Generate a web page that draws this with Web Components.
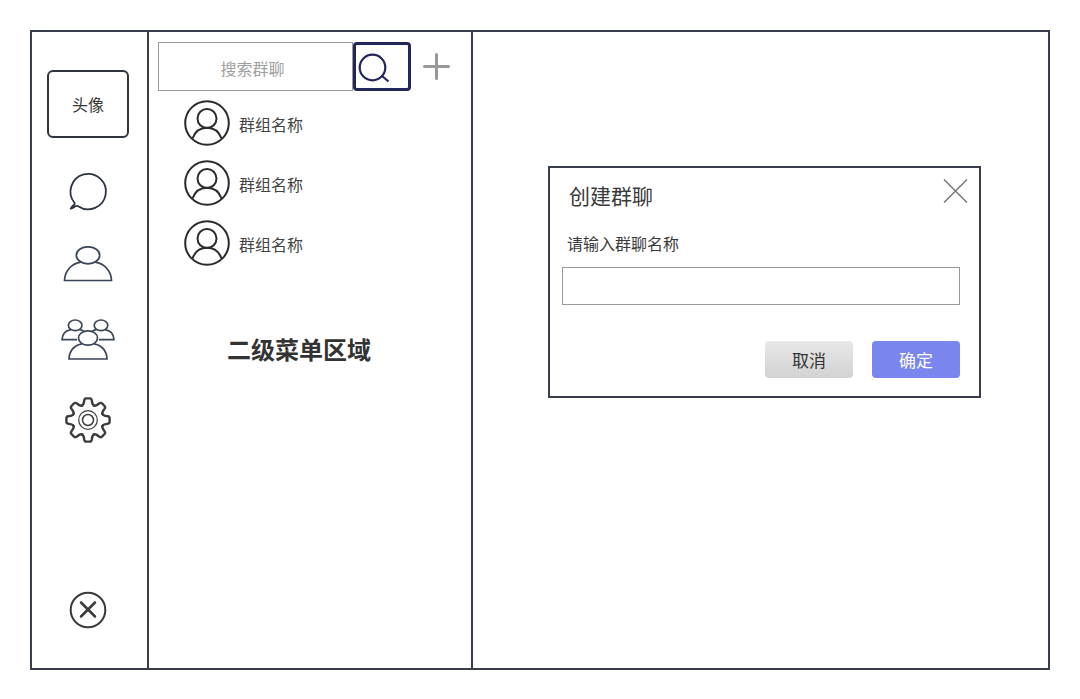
<!DOCTYPE html>
<html lang="zh-CN">
<head>
<meta charset="utf-8">
<meta name="viewport" content="width=device-width, initial-scale=1">
<title>创建群聊</title>
<style>
  body {
    margin: 0;
    background: #fff;
    color: #3a3a3a;
    font-family: "Noto Sans CJK SC", sans-serif;
    font-size: 16px;
    line-height: 24px;
    --line: #383f4a;
    --field: #999;
  }
</style>
</head>
<body>
<chat-frame>
  <nav-rail slot="rail"></nav-rail>
  <group-panel slot="panel">
    <search-bar slot="search"></search-bar>
    <group-item>群组名称</group-item>
    <group-item>群组名称</group-item>
    <group-item>群组名称</group-item>
    <span slot="caption">二级菜单区域</span>
  </group-panel>
  <create-dialog>
    <span slot="title">创建群聊</span>
  </create-dialog>
</chat-frame>

<script>
const define = (name, html) => {
  const template = document.createElement('template');
  template.innerHTML = `<style>
    *, :host { box-sizing: border-box; }
    button, input { font: inherit; color: inherit; margin: 0; }
    button { border: 0; padding: 0; background: none; cursor: pointer; }
    svg { display: block; fill: none; }
  </style>` + html;
  customElements.define(name, class extends HTMLElement {
    constructor() {
      super();
      this.attachShadow({ mode: 'open' }).append(template.content.cloneNode(true));
    }
  });
};

define('chat-frame', `
  <style>
    :host { display: grid; min-height: 100vh; padding: 30px 30px 29px; }
    main { display: grid; grid-template-columns: 117px 324px 1fr; border: 2px solid var(--line); }
    section { padding: 134px 67px 32px 75px; }
  </style>
  <main>
    <slot name="rail"></slot>
    <slot name="panel"></slot>
    <section><slot></slot></section>
  </main>`);

define('nav-rail', `
  <style>
    :host { display: flex; border-right: 2px solid var(--line); padding: 38px 18px 39px 15px; }
    nav { flex: 1; display: flex; flex-direction: column; align-items: center; gap: 36px; }
    .avatar { width: 82px; height: 68px; border: 2px solid #2f353e; border-radius: 6px; }
    .exit { margin-top: auto; }
  </style>
  <nav>
    <button class="avatar">头像</button>
    <button aria-label="消息">
      <svg width="38" height="36" viewBox="0 2 38 36" overflow="visible" stroke="#2b3440" stroke-width="1.8" stroke-linejoin="round">
        <path d="M5.500 30.800A17.700 17.700 0 1 1 9.200 34.200C8.300 33.600 7.400 33.700 6.500 34.200 5 35 3.500 36 1.700 36.600 2.500 34.800 4.200 33.500 5.300 32.500 5.900 32 6 31.500 5.500 30.800Z"/>
      </svg>
    </button>
    <button aria-label="联系人">
      <svg width="50" height="36" viewBox="0 0 50 36" stroke="#3b4656" stroke-width="1.700">
        <ellipse cx="25" cy="9.300" rx="11.700" ry="8.500"/>
        <path d="M18 16.200C8.500 17.500 1.800 25 1.500 34.500H48.500C48.200 25 41.500 17.500 32 16.200"/>
      </svg>
    </button>
    <button aria-label="群组">
      <svg width="54" height="43" viewBox="0 0 54 43" stroke="#3b4656" stroke-width="1.700">
        <ellipse cx="14.200" cy="7.300" rx="6.800" ry="5.300"/>
        <ellipse cx="40" cy="7.300" rx="6.800" ry="5.300"/>
        <path d="M16 21.700H1C1.300 16.500 4.500 12.500 10 11.700M18.500 11.700C20.500 12 22 12.700 23 13.400M38 21.700H53C52.700 16.500 49.500 12.500 44 11.700M35.500 11.700C33.500 12 32 12.700 31 13.400"/>
        <ellipse cx="27" cy="20" rx="9.500" ry="7.200"/>
        <path d="M21 25.800C13.500 27 8.300 32.500 8 41H46C45.700 32.500 40.500 27 33 25.800"/>
      </svg>
    </button>
    <button aria-label="设置">
      <svg width="46" height="46" viewBox="-23 -23 46 46" stroke="#3c3c3c" stroke-width="2.400" stroke-linecap="round">
        <g id="gear"></g>
        <circle r="9.300" stroke-width="1.200"/>
        <circle r="5.500" stroke-width="1.500"/>
      </svg>
    </button>
    <button class="exit" aria-label="退出">
      <svg width="38" height="38" viewBox="0 0 38 38" stroke="#3a3a3a">
        <circle cx="19" cy="19" r="17.300" stroke-width="2"/>
        <path d="M12 11.500 26 25.500M26 11.500 12 25.500" stroke-width="2.500" stroke-linecap="round"/>
      </svg>
    </button>
  </nav>`);

// The gear outline is one tooth repeated every 45 degrees.
document.querySelectorAll('nav-rail').forEach(rail => {
  const tooth = 'M-6-14.400C-4.200-15.200-4.100-17-3.800-19.500Q-3.500-21.600-1.800-21.600H1.800Q3.500-21.600 3.800-19.500C4.100-17 4.200-15.200 6-14.400';
  rail.shadowRoot.getElementById('gear').innerHTML =
    Array.from({ length: 8 }, (_, i) => `<path d="${tooth}" transform="rotate(${i * 45})"/>`).join('');
});

define('group-panel', `
  <style>
    :host { display: block; border-right: 2px solid var(--line); padding: 10px 20px 24px 9px; }
    ul { display: flex; flex-direction: column; gap: 14px; margin: 9px 0 0; padding: 0 0 0 26px; }
    h2 { margin: 65px 0 0; padding-left: 69px; font-size: 24px; line-height: 36px; color: #333; }
  </style>
  <slot name="search"></slot>
  <ul><slot></slot></ul>
  <h2><slot name="caption"></slot></h2>`);

define('search-bar', `
  <style>
    :host { display: block; }
    form { display: flex; align-items: center; }
    input { flex: 1; min-width: 0; height: 49px; border: 1px solid var(--field); border-radius: 0; padding: 2px 6px 0 0; text-align: center; background: #fff; }
    input::placeholder { color: #a0a0a0; opacity: 1; }
    .find { width: 58px; height: 49px; border: 3px solid #23265a; border-radius: 4px; padding-left: 2px; }
    .add { margin-left: 12px; margin-right: 1px; }
  </style>
  <form>
    <input type="text" aria-label="搜索群聊" placeholder="搜索群聊">
    <button class="find" type="button" aria-label="搜索">
      <svg width="32" height="32" viewBox="0 0 32 32" stroke="#23265a" stroke-width="2.200">
        <circle cx="14.500" cy="16.500" r="12.800"/>
        <path d="M23.500 24.500 30.500 30.500"/>
      </svg>
    </button>
    <button class="add" type="button" aria-label="新建">
      <svg width="27" height="27" viewBox="0 0 27 27" stroke="#999" stroke-width="3" stroke-linecap="round">
        <path d="M13.500 1.500V25.500M1.500 13.500H25.500"/>
      </svg>
    </button>
  </form>`);

define('group-item', `
  <style>
    :host { display: flex; align-items: center; gap: 9px; color: #444; }
    span { padding-top: 2px; }
  </style>
  <svg width="46" height="46" viewBox="0 0 46 46" stroke="#2b2b2b" stroke-width="2" aria-hidden="true">
    <circle cx="23" cy="23" r="21.800"/>
    <circle cx="23" cy="18.500" r="9.500"/>
    <path d="M8.500 38.500C11 31.500 16.500 27.800 23 27.800S35 31.500 37.500 38.500"/>
  </svg>
  <span><slot></slot></span>`);
document.querySelectorAll('group-item').forEach(item => item.setAttribute('role', 'listitem'));

define('create-dialog', `
  <style>
    :host { display: block; border: 2px solid var(--line); padding: 10px 19px 18px 12px; background: #fff; }
    header { display: flex; justify-content: space-between; align-items: flex-start; margin-right: -8px; padding-left: 7px; }
    h1 { margin: 0; font-size: 21px; line-height: 34px; font-weight: 400; }
    label { display: block; margin: 19px 0 12px; padding-left: 5px; }
    input { display: block; width: 100%; height: 38px; border: 1px solid var(--field); border-radius: 0; padding: 0 8px; background: #fff; }
    footer { display: flex; justify-content: flex-end; gap: 19px; margin-top: 36px; }
    footer button { width: 88px; height: 37px; border-radius: 4px; font-size: 17px; color: #333; background: linear-gradient(#e8e8e8, #d2d2d2); }
    footer .ok { color: #fff; background: #7b85ee; }
  </style>
  <form role="dialog" aria-labelledby="title">
    <header>
      <h1 id="title"><slot name="title"></slot></h1>
      <button type="button" aria-label="关闭">
        <svg width="25" height="26" viewBox="0 0 25 26" stroke="#777" stroke-width="1.500">
          <path d="M1 1.500 24 24.500M24 1.500 1 24.500"/>
        </svg>
      </button>
    </header>
    <label for="name">请输入群聊名称</label>
    <input id="name" type="text">
    <footer>
      <button type="button">取消</button>
      <button type="button" class="ok">确定</button>
    </footer>
  </form>`);
</script>
</body>
</html>
